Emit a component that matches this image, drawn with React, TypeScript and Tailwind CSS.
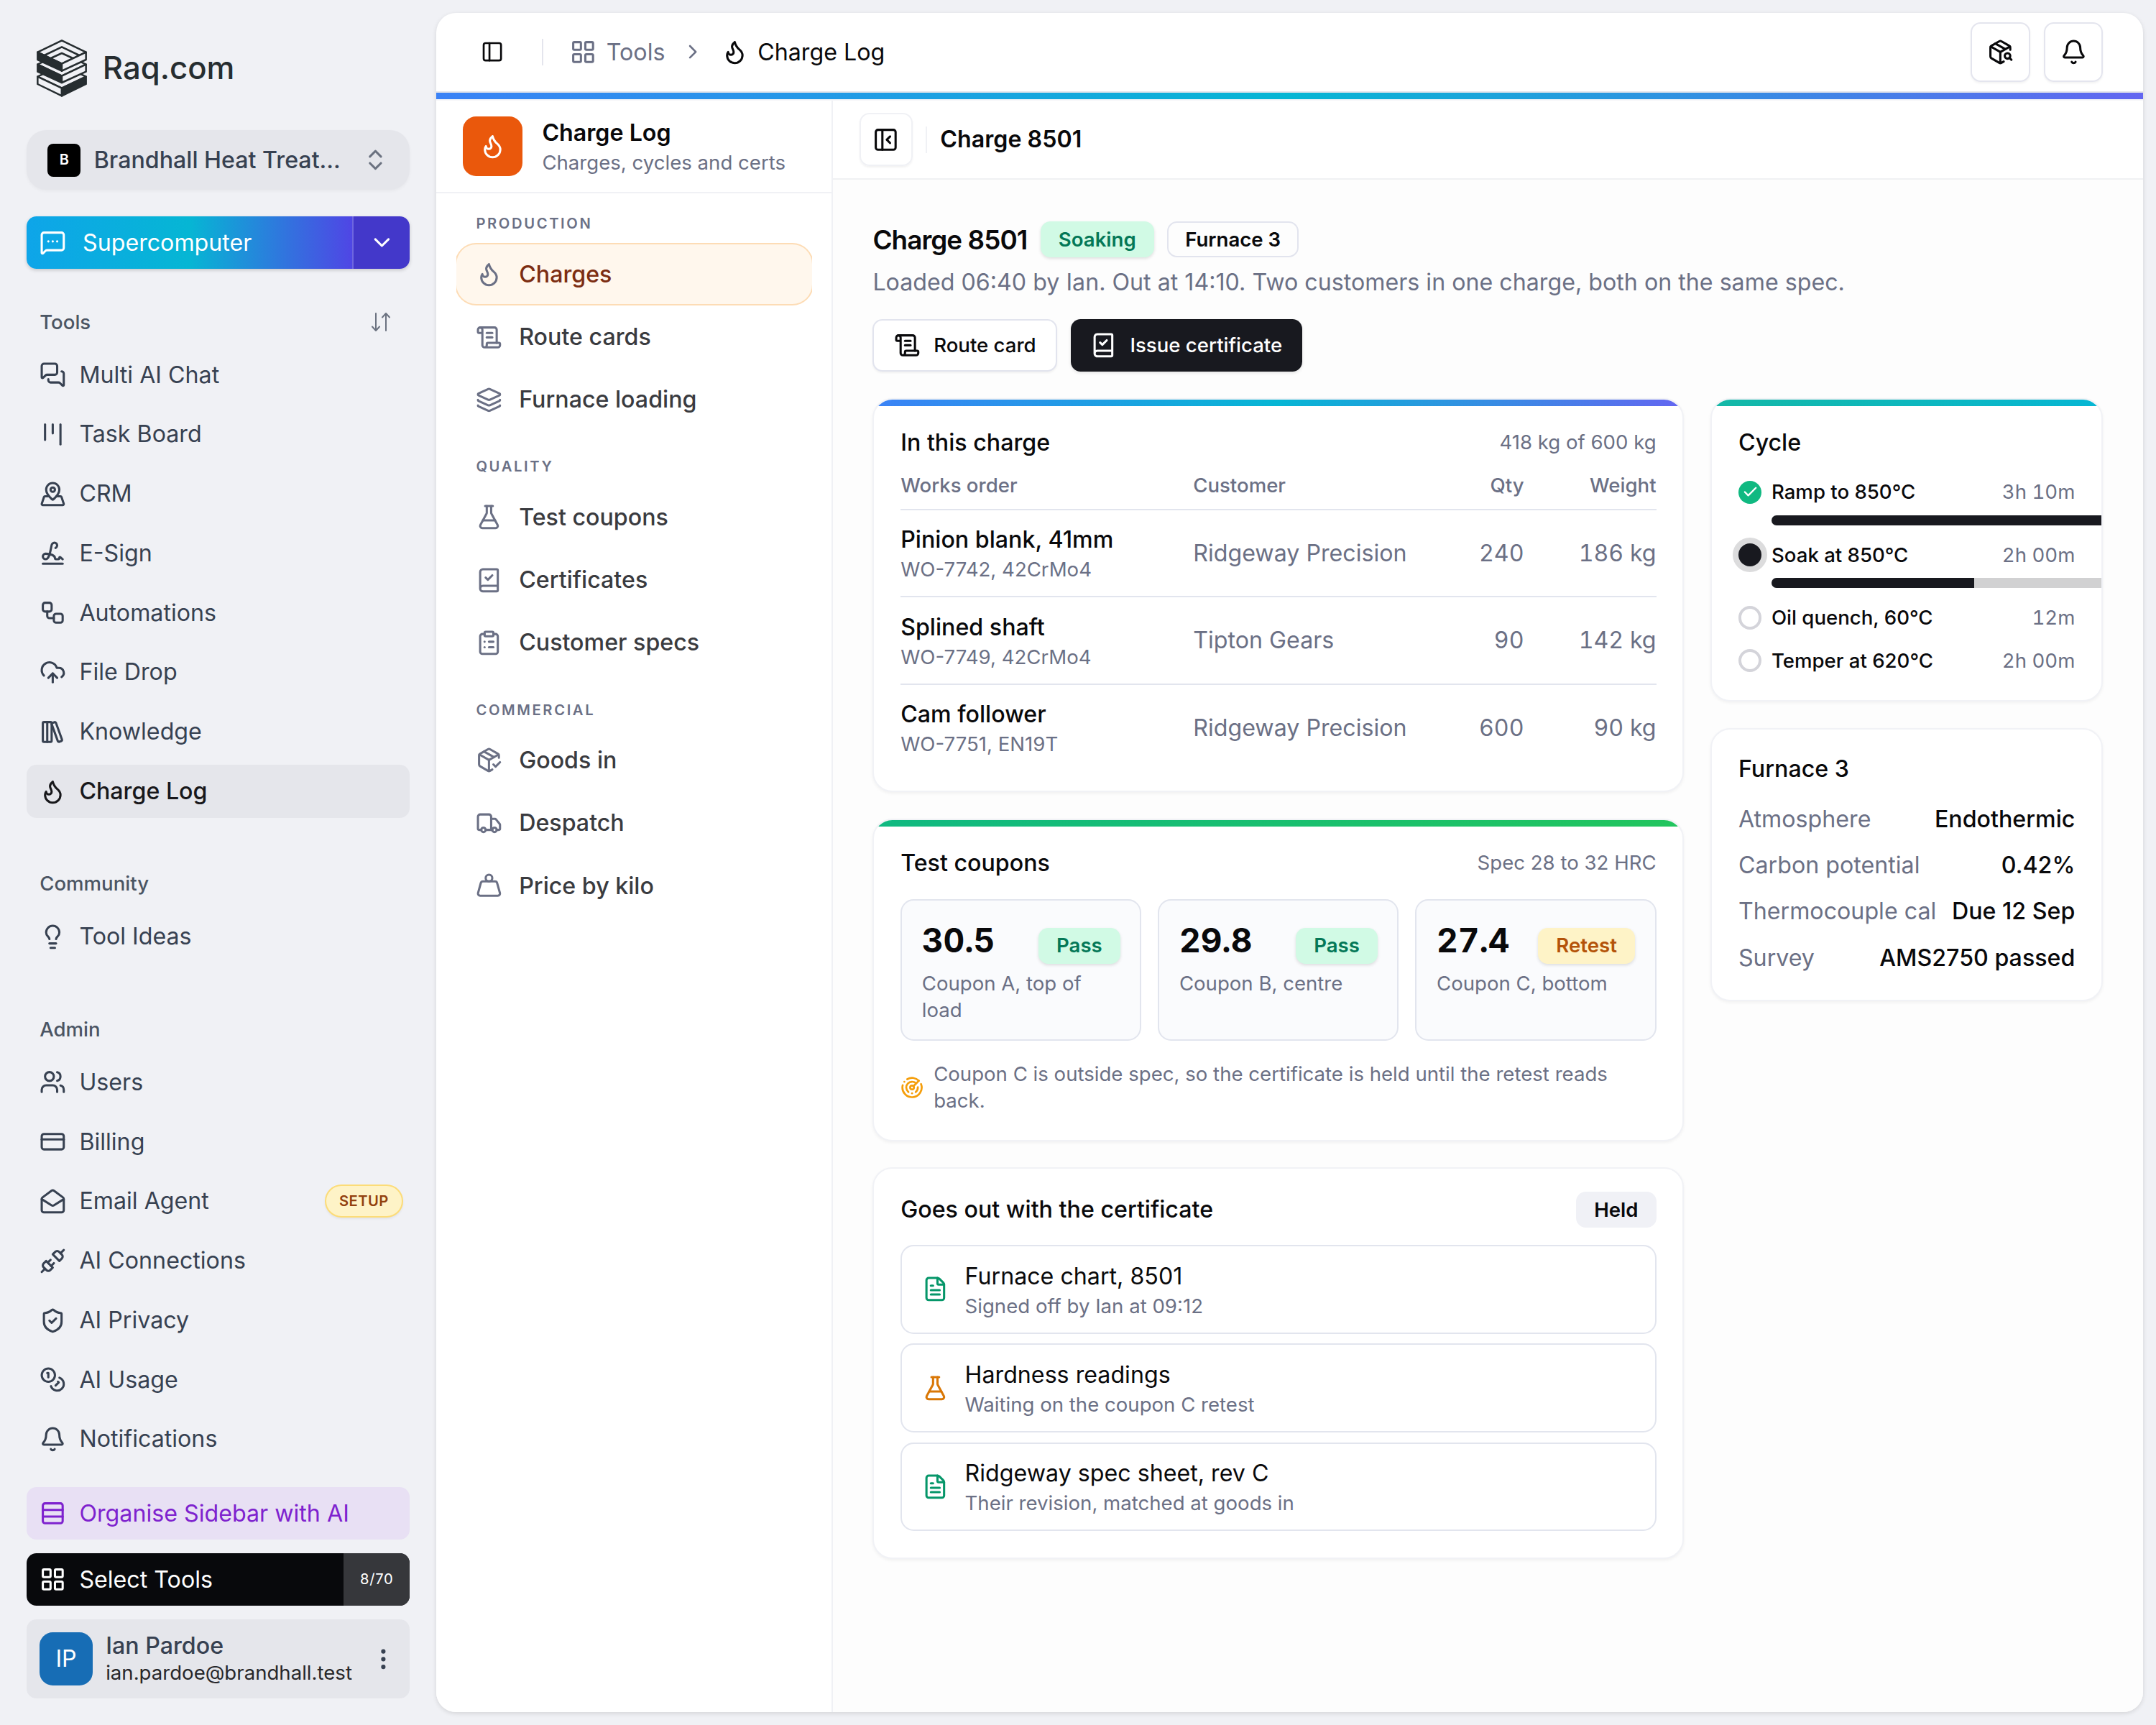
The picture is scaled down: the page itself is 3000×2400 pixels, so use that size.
import React from 'react'
import clsx from 'clsx'
import {
  Bell,
  BookCheck,
  Check,
  ChevronDown,
  ChevronRight,
  ChevronsUpDown,
  ClipboardList,
  CloudUpload,
  Coins,
  CreditCard,
  EllipsisVertical,
  FileText,
  Flame,
  FlaskConical,
  Kanban,
  Layers,
  LayoutGrid,
  LibraryBig,
  Lightbulb,
  MailOpen,
  MapPinned,
  MessageSquareMore,
  MessagesSquare,
  PackageCheck,
  PackageSearch,
  PanelLeft,
  PanelLeftClose,
  Radar,
  Rows3,
  ScrollText,
  ShieldCheck,
  Signature,
  Truck,
  Unplug,
  Users,
  Weight,
  Workflow,
  type LucideIcon,
} from 'lucide-react'

type NavItem = { label: string; icon: LucideIcon; active?: boolean; badge?: string }

const mainNav: { title: string; sortable?: boolean; items: NavItem[] }[] = [
  {
    title: 'Tools',
    sortable: true,
    items: [
      { label: 'Multi AI Chat', icon: MessagesSquare },
      { label: 'Task Board', icon: Kanban },
      { label: 'CRM', icon: MapPinned },
      { label: 'E-Sign', icon: Signature },
      { label: 'Automations', icon: Workflow },
      { label: 'File Drop', icon: CloudUpload },
      { label: 'Knowledge', icon: LibraryBig },
      { label: 'Charge Log', icon: Flame, active: true },
    ],
  },
  {
    title: 'Community',
    items: [{ label: 'Tool Ideas', icon: Lightbulb }],
  },
  {
    title: 'Admin',
    items: [
      { label: 'Users', icon: Users },
      { label: 'Billing', icon: CreditCard },
      { label: 'Email Agent', icon: MailOpen, badge: 'SETUP' },
      { label: 'AI Connections', icon: Unplug },
      { label: 'AI Privacy', icon: ShieldCheck },
      { label: 'AI Usage', icon: Coins },
      { label: 'Notifications', icon: Bell },
    ],
  },
]

const toolNav: { title: string; items: NavItem[] }[] = [
  {
    title: 'PRODUCTION',
    items: [
      { label: 'Charges', icon: Flame, active: true },
      { label: 'Route cards', icon: ScrollText },
      { label: 'Furnace loading', icon: Layers },
    ],
  },
  {
    title: 'QUALITY',
    items: [
      { label: 'Test coupons', icon: FlaskConical },
      { label: 'Certificates', icon: BookCheck },
      { label: 'Customer specs', icon: ClipboardList },
    ],
  },
  {
    title: 'COMMERCIAL',
    items: [
      { label: 'Goods in', icon: PackageCheck },
      { label: 'Despatch', icon: Truck },
      { label: 'Price by kilo', icon: Weight },
    ],
  },
]

const orders = [
  { part: 'Pinion blank, 41mm', ref: 'WO-7742, 42CrMo4', customer: 'Ridgeway Precision', qty: '240', weight: '186 kg' },
  { part: 'Splined shaft', ref: 'WO-7749, 42CrMo4', customer: 'Tipton Gears', qty: '90', weight: '142 kg' },
  { part: 'Cam follower', ref: 'WO-7751, EN19T', customer: 'Ridgeway Precision', qty: '600', weight: '90 kg' },
]

const coupons = [
  { value: '30.5', status: 'Pass', label: 'Coupon A, top of load' },
  { value: '29.8', status: 'Pass', label: 'Coupon B, centre' },
  { value: '27.4', status: 'Retest', label: 'Coupon C, bottom' },
]

const documents = [
  { title: 'Furnace chart, 8501', note: 'Signed off by Ian at 09:12', icon: FileText, ready: true },
  { title: 'Hardness readings', note: 'Waiting on the coupon C retest', icon: FlaskConical, ready: false },
  { title: 'Ridgeway spec sheet, rev C', note: 'Their revision, matched at goods in', icon: FileText, ready: true },
]

const steps = [
  { label: 'Ramp to 850°C', time: '3h 10m', state: 'done', progress: 488 },
  { label: 'Soak at 850°C', time: '2h 00m', state: 'current', progress: 282 },
  { label: 'Oil quench, 60°C', time: '12m', state: 'pending' },
  { label: 'Temper at 620°C', time: '2h 00m', state: 'pending' },
]

const furnace = [
  ['Atmosphere', 'Endothermic'],
  ['Carbon potential', '0.42%'],
  ['Thermocouple cal', 'Due 12 Sep'],
  ['Survey', 'AMS2750 passed'],
]

const Logo = () => (
  <svg viewBox="0 0 210 240" className="h-[80px] w-[70px]" strokeWidth="7.5" strokeLinejoin="round" stroke="#262d30" fill="#f0f1f5">
    {/* bottom tray */}
    <path d="M105 106 206 155 105 203 4 155Z" />
    <path d="M4 155V186L105 235V203Z" />
    <path d="M206 155V186L105 235V203Z" fill="#262d30" />
    {/* middle tray */}
    <path d="M105 55 206 104 105 152 4 104Z" />
    <path d="M4 104V134L105 180V152Z" fill="#262d30" />
    <path d="M206 104V134L105 180V152Z" />
    {/* top tray */}
    <path d="M105 4 206 53 105 101 4 53Z" />
    <path d="M32 66 105 31 178 66M59 78 105 57 151 78" fill="none" />
    <path d="M4 53V84L105 131V101Z" fill="#262d30" />
    <path d="M206 53V84L105 131V101Z" />
  </svg>
)

const SortIcon = () => (
  <svg viewBox="0 0 26 26" className="h-[26px] w-[26px]" fill="none" stroke="currentColor" strokeWidth="2" strokeLinecap="round" strokeLinejoin="round">
    <path d="M6 1v24M1 19.5 6 25l5-5.5M20 25V1M15 6.5 20 1l5 5.5" />
  </svg>
)

const Badge = ({ tone, children }: { tone: 'green' | 'amber' | 'outline' | 'muted'; children: React.ReactNode }) => (
  <span
    className={clsx(
      'inline-flex shrink-0 items-center rounded-md border-2 px-2.5 py-0.5 text-xs font-semibold',
      tone === 'green' && 'border-transparent bg-[#d1fae5] text-[#047857] shadow-[0_2px_4px_rgba(0,0,0,0.12)]',
      tone === 'amber' && 'border-transparent bg-[#fef3c7] text-[#b45309] shadow-[0_2px_4px_rgba(0,0,0,0.12)]',
      tone === 'outline' && 'border-[#e2e4ee]',
      tone === 'muted' && 'border-transparent bg-[#f0f1f6]'
    )}
  >
    {children}
  </span>
)

const Card = ({ bar, className, children }: { bar?: string; className?: string; children: React.ReactNode }) => (
  <section
    className={clsx(
      'flex flex-col overflow-hidden rounded-xl border-2 border-[#f1f2f6] bg-white shadow-[0_2px_4px_rgba(0,0,0,0.05)]',
      className
    )}
  >
    {bar && <div className={clsx('h-1 shrink-0', bar)} />}
    <div className={clsx('flex flex-col px-4', bar ? 'pt-3' : 'pt-[32px]')}>{children}</div>
  </section>
)

const Sidebar = () => (
  <aside className="flex w-66 shrink-0 flex-col px-4 pb-4 text-sm text-[#374151]">
    <div className="mt-[55px] ml-[14.5px] flex h-[80px] items-center gap-[21.5px]">
      <Logo />
      <span className="text-[43.7px] font-medium text-[#262d30]">Raq.com</span>
    </div>

    <button className="mt-[46.2px] flex h-9 items-center gap-2 rounded-xl bg-[#e5e6eb] px-[29.5px] font-medium shadow-[0_2px_4px_rgba(0,0,0,0.04)]">
      <span className="flex size-5 items-center justify-center rounded-[8px] bg-black text-[20px] font-semibold text-white">B</span>
      <span className="flex-1 truncate text-left">Brandhall Heat Treat...</span>
      <ChevronsUpDown className="size-4 text-[#6b7280]" />
    </button>

    <div className="mt-4 flex h-8 overflow-hidden rounded-md text-white shadow-[0_2px_5px_rgba(0,0,0,0.18)]">
      <button className="flex flex-1 items-center gap-2.5 bg-linear-to-r/srgb from-[#0ea5e9] via-[#06b6d4] to-[#4f46e5] px-2">
        <MessageSquareMore className="size-4" />
        Supercomputer
      </button>
      <button className="flex w-[80px] items-center justify-center border-l-2 border-[#6d66e0] bg-[#4338ca]">
        <ChevronDown className="size-4" />
      </button>
    </div>

    <nav className="mt-4 flex flex-col gap-6">
      {mainNav.map(group => (
        <div key={group.title}>
          <div className="flex h-8 items-center justify-between px-2 text-xs font-medium text-[#4b5563]">
            {group.title}
            {group.sortable && (
              <span className="mr-1 text-[#6b7280]">
                <SortIcon />
              </span>
            )}
          </div>
          <div className="flex flex-col gap-1">
            {group.items.map(({ label, icon: Icon, active, badge }) => (
              <a
                key={label}
                className={clsx('flex h-8 items-center gap-2 rounded-md pr-1 pl-2', active && 'bg-[#e5e6eb] font-medium text-[#18181b]')}
              >
                <Icon className="size-4" />
                <span className="flex-1">{label}</span>
                {badge && (
                  <span className="flex h-5 items-center rounded-full border-2 border-[#fcdc78] bg-[#fef3c7] px-2 text-[20.2px] font-semibold tracking-[0.022em] text-[#92400e] shadow-[0_2px_3px_rgba(0,0,0,0.06)]">
                    {badge}
                  </span>
                )}
              </a>
            ))}
          </div>
        </div>
      ))}
    </nav>

    <div className="mt-auto flex flex-col gap-2">
      <button className="flex h-8 items-center gap-2 rounded-md bg-[#e8e0f4] px-2 text-[#7e22ce]">
        <Rows3 className="size-4" />
        Organise Sidebar with AI
      </button>
      <button className="flex h-8 items-center overflow-hidden rounded-md bg-[#08090c] text-white">
        <span className="flex flex-1 items-center gap-2 pl-2">
          <LayoutGrid className="size-4" />
          Select Tools
        </span>
        <span className="flex h-full items-center bg-[#36373b] px-2.5 text-[20.2px] tracking-[0.035em]">8/70</span>
      </button>
      <button className="flex h-12 items-center gap-2 rounded-md bg-[#e5e6eb] px-2 text-left">
        <span className="flex size-8 items-center justify-center rounded-lg bg-[#176db5] text-white">IP</span>
        <span className="flex flex-1 flex-col">
          <span className="leading-[38px] font-medium">Ian Pardoe</span>
          <span className="text-xs leading-[37px] text-[#27272a]">ian.pardoe@brandhall.test</span>
        </span>
        <EllipsisVertical className="size-4" />
      </button>
    </div>
  </aside>
)

const TopBar = () => (
  <header className="shrink-0">
    <div className="flex h-12 items-center border-b-2 border-[#e2e4ea] pr-6 pl-5">
      <button className="flex size-7 items-center justify-center">
        <PanelLeft className="size-3.5" />
      </button>
      <div className="mx-4 h-4 w-[2px] bg-[#e4e5ed]" />
      <div className="flex flex-1 items-center gap-2.5 text-sm">
        <span className="flex items-center gap-1.5 text-[#6b7085]">
          <LayoutGrid className="size-4" />
          Tools
        </span>
        <ChevronRight className="size-3.5 text-[#6b7085]" />
        <span className="flex items-center gap-1.5">
          <Flame className="size-4" />
          Charge Log
        </span>
      </div>
      <div className="flex gap-2">
        <button className="flex size-9 items-center justify-center rounded-md border-2 border-[#e4e5ee] shadow-[0_2px_3px_rgba(0,0,0,0.05)]">
          <PackageSearch className="size-4" />
        </button>
        <button className="flex size-9 items-center justify-center rounded-md border-2 border-[#e4e5ee] shadow-[0_2px_3px_rgba(0,0,0,0.05)]">
          <Bell className="size-4" />
        </button>
      </div>
    </div>
    <div className="h-1 bg-linear-to-r/srgb from-[#3b82f6] via-[#06b6d4] to-[#6366f1]" />
    <div className="h-[2px] bg-[#f4f5f8]" />
  </header>
)

const ToolNav = () => (
  <aside className="flex w-60 shrink-0 flex-col border-r-2 border-[#f0f1f5] bg-white">
    <div className="flex h-14 items-center gap-3 border-b-2 border-[#f0f1f5] px-4">
      <span className="flex size-9 items-center justify-center rounded-lg bg-[#ea580c] text-white">
        <Flame className="size-4" />
      </span>
      <div>
        <div className="text-sm font-semibold">Charge Log</div>
        <div className="text-xs text-[#6b7085]">Charges, cycles and certs</div>
      </div>
    </div>
    <nav className="mx-3 flex flex-col gap-3 overflow-x-clip pt-2">
      {toolNav.map(group => (
        <div key={group.title}>
          <div className="mb-[4.4px] flex h-[48.6px] items-center px-3 text-[20.2px] font-semibold tracking-[0.13em] text-[#6b7085]">
            {group.title}
          </div>
          <div className="flex flex-col gap-0.5">
            {group.items.map(({ label, icon: Icon, active }) => (
              <a
                key={label}
                className={clsx(
                  'flex h-9 items-center gap-2.5 rounded-xl px-3 text-sm font-medium',
                  active ? 'bg-[#fff7ed] text-[#7c2d12] ring-2 ring-[#fddcb5]' : 'text-[#3a3b3f]'
                )}
              >
                <Icon className="size-4 text-[#6b7085]" />
                {label}
              </a>
            ))}
          </div>
        </div>
      ))}
    </nav>
  </aside>
)

const ChargeCard = () => (
  <Card bar="bg-linear-to-r/srgb from-[#3b82f6] via-[#06b6d4] to-[#6366f1]" className="pb-[27.6px]">
    <div className="flex items-center justify-between">
      <h2 className="text-sm font-medium">In this charge</h2>
      <span className="text-xs text-[#6b7085]">418 kg of 600 kg</span>
    </div>
    <table className="mt-[3.8px] w-full table-fixed text-sm">
      <thead>
        <tr className="h-[66.3px] border-b-2 border-[#e2e5ee] text-xs text-[#6b7085]">
          <th className="w-[407px] text-left font-medium">Works order</th>
          <th className="text-left font-medium">Customer</th>
          <th className="w-[140px] text-right font-medium">Qty</th>
          <th className="w-[184px] text-right font-medium">Weight</th>
        </tr>
      </thead>
      <tbody>
        {orders.map(order => (
          <tr key={order.ref} className="border-b-2 border-[#e2e5ee] text-[#6b7085] last:border-0">
            <td className="py-2">
              <div className="font-medium text-[#09090b]">{order.part}</div>
              <div className="text-xs">{order.ref}</div>
            </td>
            <td>{order.customer}</td>
            <td className="text-right tabular-nums">{order.qty}</td>
            <td className="text-right tabular-nums">{order.weight}</td>
          </tr>
        ))}
      </tbody>
    </table>
  </Card>
)

const CouponCard = () => (
  <Card bar="bg-linear-to-r/srgb from-[#10b981] to-[#22c55e]" className="pb-[36px]">
    <div className="flex items-center justify-between">
      <h2 className="text-sm font-medium">Test coupons</h2>
      <span className="text-xs text-[#6b7085]">Spec 28 to 32 HRC</span>
    </div>
    <div className="mt-3 grid grid-cols-3 gap-2.5">
      {coupons.map(coupon => (
        <div key={coupon.label} className="rounded-lg border-2 border-[#e2e5ee] bg-[#fafbfd] px-3 py-2.5">
          <div className="flex items-baseline justify-between">
            <span className="text-xl font-bold tabular-nums">{coupon.value}</span>
            <Badge tone={coupon.status === 'Pass' ? 'green' : 'amber'}>{coupon.status}</Badge>
          </div>
          <div className="mt-1 text-xs text-[#6b7085]">{coupon.label}</div>
        </div>
      ))}
    </div>
    <div className="mt-3 flex items-center gap-1.5 text-xs text-[#6b7085]">
      <Radar className="size-3.5 shrink-0 text-[#f59e0b]" />
      <p>Coupon C is outside spec, so the certificate is held until the retest reads back.</p>
    </div>
  </Card>
)

const DocumentCard = () => (
  <Card className="pb-4">
    <div className="flex items-center justify-between">
      <h2 className="text-sm font-medium">Goes out with the certificate</h2>
      <Badge tone="muted">Held</Badge>
    </div>
    <div className="mt-[23.8px] flex flex-col gap-1.5">
      {documents.map(({ title, note, icon: Icon, ready }) => (
        <div key={title} className="flex items-center gap-2.5 rounded-lg border-2 border-[#e2e5ee] px-3 py-2">
          <Icon className={clsx('size-4', ready ? 'text-[#059669]' : 'text-[#d97706]')} />
          <div>
            <div className="text-sm">{title}</div>
            <div className="text-xs text-[#6b7085]">{note}</div>
          </div>
        </div>
      ))}
    </div>
  </Card>
)

const CycleCard = () => (
  <Card bar="bg-linear-to-r/srgb from-[#14b8a6] to-[#06b6d4]" className="pb-4">
    <h2 className="text-sm font-medium">Cycle</h2>
    <div className="mt-3 flex flex-col gap-2.5 text-xs">
      {steps.map(step => (
        <div key={step.label} className="flex flex-col gap-1.5">
          <div className="flex items-center gap-1.5">
            {step.state === 'done' && (
              <span className="flex size-3.5 items-center justify-center rounded-full bg-[#10b981] text-white">
                <Check className="size-2.5" strokeWidth={2.5} />
              </span>
            )}
            {step.state === 'current' && <span className="size-3.5 rounded-full bg-[#18191f] ring-8 ring-[#dcdcdd]" />}
            {step.state === 'pending' && <span className="size-3.5 rounded-full border-4 border-[#d4d4da]" />}
            <span className="flex-1 font-medium">{step.label}</span>
            <span className="text-[#6b7085] tabular-nums">{step.time}</span>
          </div>
          {step.progress && (
            <div className="ml-5 h-1.5 w-[488px] overflow-hidden rounded-full bg-[#d1d1d2]">
              <div className="h-full bg-[#18191f]" style={{ width: step.progress }} />
            </div>
          )}
        </div>
      ))}
    </div>
  </Card>
)

const FurnaceCard = () => (
  <Card className="pb-[35.5px]">
    <h2 className="text-sm font-medium">Furnace 3</h2>
    <dl className="mt-[23.5px] flex flex-col gap-2 text-sm">
      {furnace.map(([name, value]) => (
        <div key={name} className="flex justify-between whitespace-nowrap">
          <dt className="text-[#6b7085]">{name}</dt>
          <dd className="font-medium">{value}</dd>
        </div>
      ))}
    </dl>
  </Card>
)

export default function App() {
  return (
    <div className="flex h-[2400px] w-[3000px] overflow-hidden bg-[#f0f1f5] font-['Inter',sans-serif] text-[#09090b] [--radius-lg:18.4px] [--radius-md:13.8px] [--radius-xl:27.6px] [--spacing:9.2px] [--text-base:36.8px] [--text-sm:32.2px] [--text-xl:46px] [--text-xs:27.6px]">
      <Sidebar />
      <main className="my-2 mr-2 flex flex-1 flex-col overflow-hidden rounded-xl bg-white shadow-[0_2px_6px_rgba(0,0,0,0.12)]">
        <TopBar />
        <div className="flex min-h-0 flex-1">
          <ToolNav />
          <div className="flex min-w-0 flex-1 flex-col bg-[#fdfdfd]">
            <div className="flex h-12 shrink-0 items-center gap-2 border-b-2 border-[#f0f1f3] bg-white px-4">
              <button className="flex size-8 items-center justify-center rounded-md border-2 border-[#f0f1f5] shadow-[0_2px_3px_rgba(0,0,0,0.05)]">
                <PanelLeftClose className="size-4" />
              </button>
              <div className="h-4 w-[2px] bg-[#f0f1f5]" />
              <span className="text-sm font-semibold">Charge 8501</span>
            </div>

            <div className="p-6">
              <div className="flex items-center gap-2">
                <h1 className="text-base leading-[55.2px] font-semibold tracking-tight">Charge 8501</h1>
                <Badge tone="green">Soaking</Badge>
                <Badge tone="outline">Furnace 3</Badge>
              </div>
              <p className="mt-1 text-sm text-[#6b7085]">
                Loaded 06:40 by Ian. Out at 14:10. Two customers in one charge, both on the same spec.
              </p>
              <div className="mt-3 flex gap-2 text-xs font-medium">
                <button className="flex h-8 items-center gap-2 rounded-md border-2 border-[#e2e4ee] bg-white px-3 shadow-[0_2px_3px_rgba(0,0,0,0.05)]">
                  <ScrollText className="size-4" />
                  Route card
                </button>
                <button className="flex h-8 items-center gap-2 rounded-md bg-[#18191f] px-3 text-white shadow-[0_2px_4px_rgba(0,0,0,0.1)]">
                  <BookCheck className="size-4" />
                  Issue certificate
                </button>
              </div>

              <div className="mt-4 grid grid-cols-[1129px_546px] items-start gap-4">
                <div className="flex flex-col gap-4">
                  <ChargeCard />
                  <CouponCard />
                  <DocumentCard />
                </div>
                <div className="flex flex-col gap-4">
                  <CycleCard />
                  <FurnaceCard />
                </div>
              </div>
            </div>
          </div>
        </div>
      </main>
    </div>
  )
}
